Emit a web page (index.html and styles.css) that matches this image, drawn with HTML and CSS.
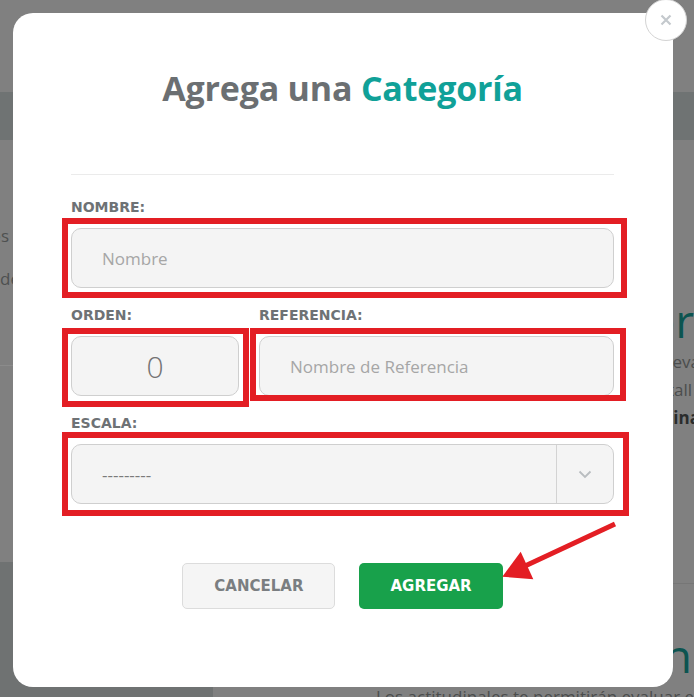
FILE: index.html
```html
<!DOCTYPE html>
<html lang="es">
<head>
<meta charset="utf-8">
<title>Agrega una Categoría</title>
<link rel="stylesheet" href="styles.css">
</head>
<body>
<div class="page">
  <div class="bg">
    <div class="bg-top"></div>
    <div class="bg-band"></div>
    <div class="bg-body">
      <div class="bg-left">
        <div class="side-list">
          <div class="side-item side-item--a">Evaluaciones</div>
          <div class="side-item side-item--b">Tipos de</div>
        </div>
        <div class="side-rule"></div>
        <div class="side-dark"></div>
      </div>
      <div class="bg-right">
        <div class="bg-line bg-heading">Evaluaciones por</div>
        <div class="bg-para">
          <div class="bg-line bg-line--cut">Las escalas te permiten crear nuevas eva</div>
          <div class="bg-line bg-line--tight">para cada una de ellas con detall</div>
          <div class="bg-line bg-line--cut bg-strong">Asigna una categoría y examina</div>
        </div>
        <div class="bg-rule"></div>
        <div class="bg-line bg-heading bg-heading--second">Actitudinales de evaluación</div>
        <div class="bg-text">Los actitudinales te permitirán evaluar el comportamiento</div>
      </div>
    </div>
  </div>

  <div class="modal">
    <h1 class="title">Agrega una <span class="title-accent">Categoría</span></h1>
    <div class="divider"></div>
    <form class="form">
      <div class="field">
        <label class="label" for="nombre">NOMBRE:</label>
        <div class="control">
          <input class="input" id="nombre" type="text" placeholder="Nombre">
          <span class="mark mark--nombre"></span>
        </div>
      </div>
      <div class="row">
        <div class="field">
          <label class="label" for="orden">ORDEN:</label>
          <div class="control">
            <input class="input input--number" id="orden" type="text" value="0">
            <span class="mark mark--orden"></span>
          </div>
        </div>
        <div class="field">
          <label class="label" for="referencia">REFERENCIA:</label>
          <div class="control">
            <input class="input" id="referencia" type="text" placeholder="Nombre de Referencia">
            <span class="mark mark--ref"></span>
          </div>
        </div>
      </div>
      <div class="field">
        <label class="label">ESCALA:</label>
        <div class="control">
          <div class="select">
            <span class="select-value">---------</span>
            <span class="select-arrow">
              <svg width="14" height="9" viewBox="0 0 14 9"><path d="M1.5 1.5 L7 7 L12.5 1.5" fill="none" stroke="#b9bdc0" stroke-width="1.8"/></svg>
            </span>
          </div>
          <span class="mark mark--escala"></span>
        </div>
      </div>
      <div class="actions">
        <button type="button" class="btn btn--cancel">CANCELAR</button>
        <button type="button" class="btn btn--add">AGREGAR</button>
      </div>
    </form>
  </div>

  <button type="button" class="close" aria-label="Cerrar">
    <svg width="12" height="12" viewBox="0 0 12 12"><path d="M1.5 1.5 L10.5 10.5 M10.5 1.5 L1.5 10.5" stroke="#c4c9cd" stroke-width="2.2" fill="none"/></svg>
  </button>

  <svg class="arrow" width="130" height="72" viewBox="0 0 130 72">
    <line x1="120" y1="9" x2="30" y2="51" stroke="#e31e24" stroke-width="5"/>
    <polygon points="7.3,61.7 25.7,36.7 38.3,64.3" fill="#e31e24"/>
  </svg>
</div>
</body>
</html>
```

FILE: styles.css
```css
* { box-sizing: border-box; }

body {
  margin: 0;
  background: #808080;
}

.page {
  position: relative;
  width: 694px;
  height: 697px;
  overflow: hidden;
  background: #808080;
  font-family: "Open Sans", "Liberation Sans", sans-serif;
}

/* ---------- background page (dimmed) ---------- */
.bg-top { height: 92px; }
.bg-band { height: 48px; background: #6f7373; }

.bg-body {
  display: grid;
  grid-template-columns: 213px minmax(0, 1fr);
  height: 557px;
}

.bg-left {
  display: flex;
  flex-direction: column;
  min-width: 0;
}

.side-list { padding-top: 74px; }

.side-item {
  display: flex;
  justify-content: flex-end;
  white-space: nowrap;
  font-size: 17px;
  line-height: 43px;
  color: #4e5050;
}
.side-item--a { width: 9px; }
.side-item--b { width: 20px; }

.side-rule {
  margin-top: 65px;
  height: 1px;
  background: #8b8b8b;
}

.side-dark {
  margin-top: auto;
  height: 149px;
  background: #6f7272;
}

.bg-right {
  display: flex;
  flex-direction: column;
  min-width: 0;
  padding-left: 163px;
  padding-top: 152px;
}

.bg-line {
  display: flex;
  justify-content: flex-end;
  white-space: nowrap;
}

.bg-heading {
  font-size: 46px;
  line-height: 56px;
  color: #0c5450;
}

.bg-heading--second { margin-top: 43px; margin-right: 2px; }

.bg-para {
  font-size: 17px;
  line-height: 28px;
  color: #4b4d4d;
}

.bg-line--cut { margin-right: -6px; }
.bg-line--tight { margin-right: 2px; }
.bg-strong { font-weight: 700; color: #2a2c2c; }

.bg-rule {
  margin-top: 151px;
  height: 1px;
  background: #767676;
}

.bg-text {
  white-space: nowrap;
  font-size: 17px;
  line-height: 28px;
  color: #4b4d4d;
}

/* ---------- modal ---------- */
.modal {
  position: absolute;
  left: 13px;
  top: 13px;
  width: 660px;
  height: 674px;
  background: #ffffff;
  border-radius: 20px;
  padding: 52px 59px 0 58px;
}

.title {
  margin: 0;
  text-align: center;
  font-family: "Open Sans", sans-serif;
  font-weight: 700;
  font-size: 34px;
  line-height: 46px;
  letter-spacing: -0.2px;
  color: #6b6f72;
}

.title-accent { color: #10a198; }

.divider {
  margin-top: 63px;
  height: 1px;
  background: #ebebeb;
}

.form { margin: 24px 0 0; }

.field { margin-bottom: 19px; }

.label {
  display: block;
  margin-bottom: 12px;
  font-family: "DejaVu Sans", sans-serif;
  font-weight: 700;
  font-size: 14px;
  line-height: 17px;
  color: #6e7275;
}

.control { position: relative; }

.input {
  display: block;
  width: 100%;
  height: 60px;
  margin: 0;
  padding: 0 0 0 30px;
  border: 1px solid #cfcfcf;
  border-radius: 10px;
  background: #f4f4f4;
  font-family: "Open Sans", sans-serif;
  font-size: 17px;
  color: #737373;
  outline: none;
}

.input::placeholder { color: #a6a6a6; opacity: 1; }

.input--number {
  padding: 0;
  text-align: center;
  font-weight: 300;
  font-size: 30px;
  color: #737373;
}

.row {
  display: grid;
  grid-template-columns: 168px 1fr;
  column-gap: 20px;
}

.select {
  display: flex;
  height: 60px;
  border: 1px solid #cfcfcf;
  border-radius: 10px;
  background: #f4f4f4;
}

.select-value {
  flex: 1;
  display: flex;
  align-items: center;
  padding-left: 30px;
  font-size: 17px;
  color: #7a7a7a;
}

.select-arrow {
  width: 57px;
  display: flex;
  align-items: center;
  justify-content: center;
  border-left: 1px solid #d3d3d3;
}

.actions {
  display: flex;
  justify-content: center;
  gap: 24px;
  margin-top: 59px;
}

.btn {
  height: 46px;
  padding: 0 31px;
  border-radius: 5px;
  font-family: "DejaVu Sans", sans-serif;
  font-weight: 700;
  font-size: 15px;
  cursor: pointer;
}

.btn--cancel {
  border: 1px solid #dcdcdc;
  background: #f5f5f5;
  color: #7a7e81;
}

.btn--add {
  border: none;
  background: #18a14b;
  color: #ffffff;
}

/* ---------- annotations ---------- */
.mark {
  position: absolute;
  border: 6px solid #e31e24;
  pointer-events: none;
}
.mark--nombre { left: -9px; right: -13px; top: -10px; bottom: -10px; }
.mark--orden { left: -9px; right: -10px; top: -8px; bottom: -11px; }
.mark--ref { left: -9px; right: -12px; top: -8px; bottom: -5px; }
.mark--escala { left: -9px; right: -15px; top: -12px; bottom: -12px; }

.arrow {
  position: absolute;
  left: 495px;
  top: 515px;
}

.close {
  position: absolute;
  left: 645px;
  top: -1px;
  width: 42px;
  height: 42px;
  padding: 0;
  border: 1px solid #d3d3d3;
  border-radius: 50%;
  background: #ffffff;
  display: flex;
  align-items: center;
  justify-content: center;
}
```
